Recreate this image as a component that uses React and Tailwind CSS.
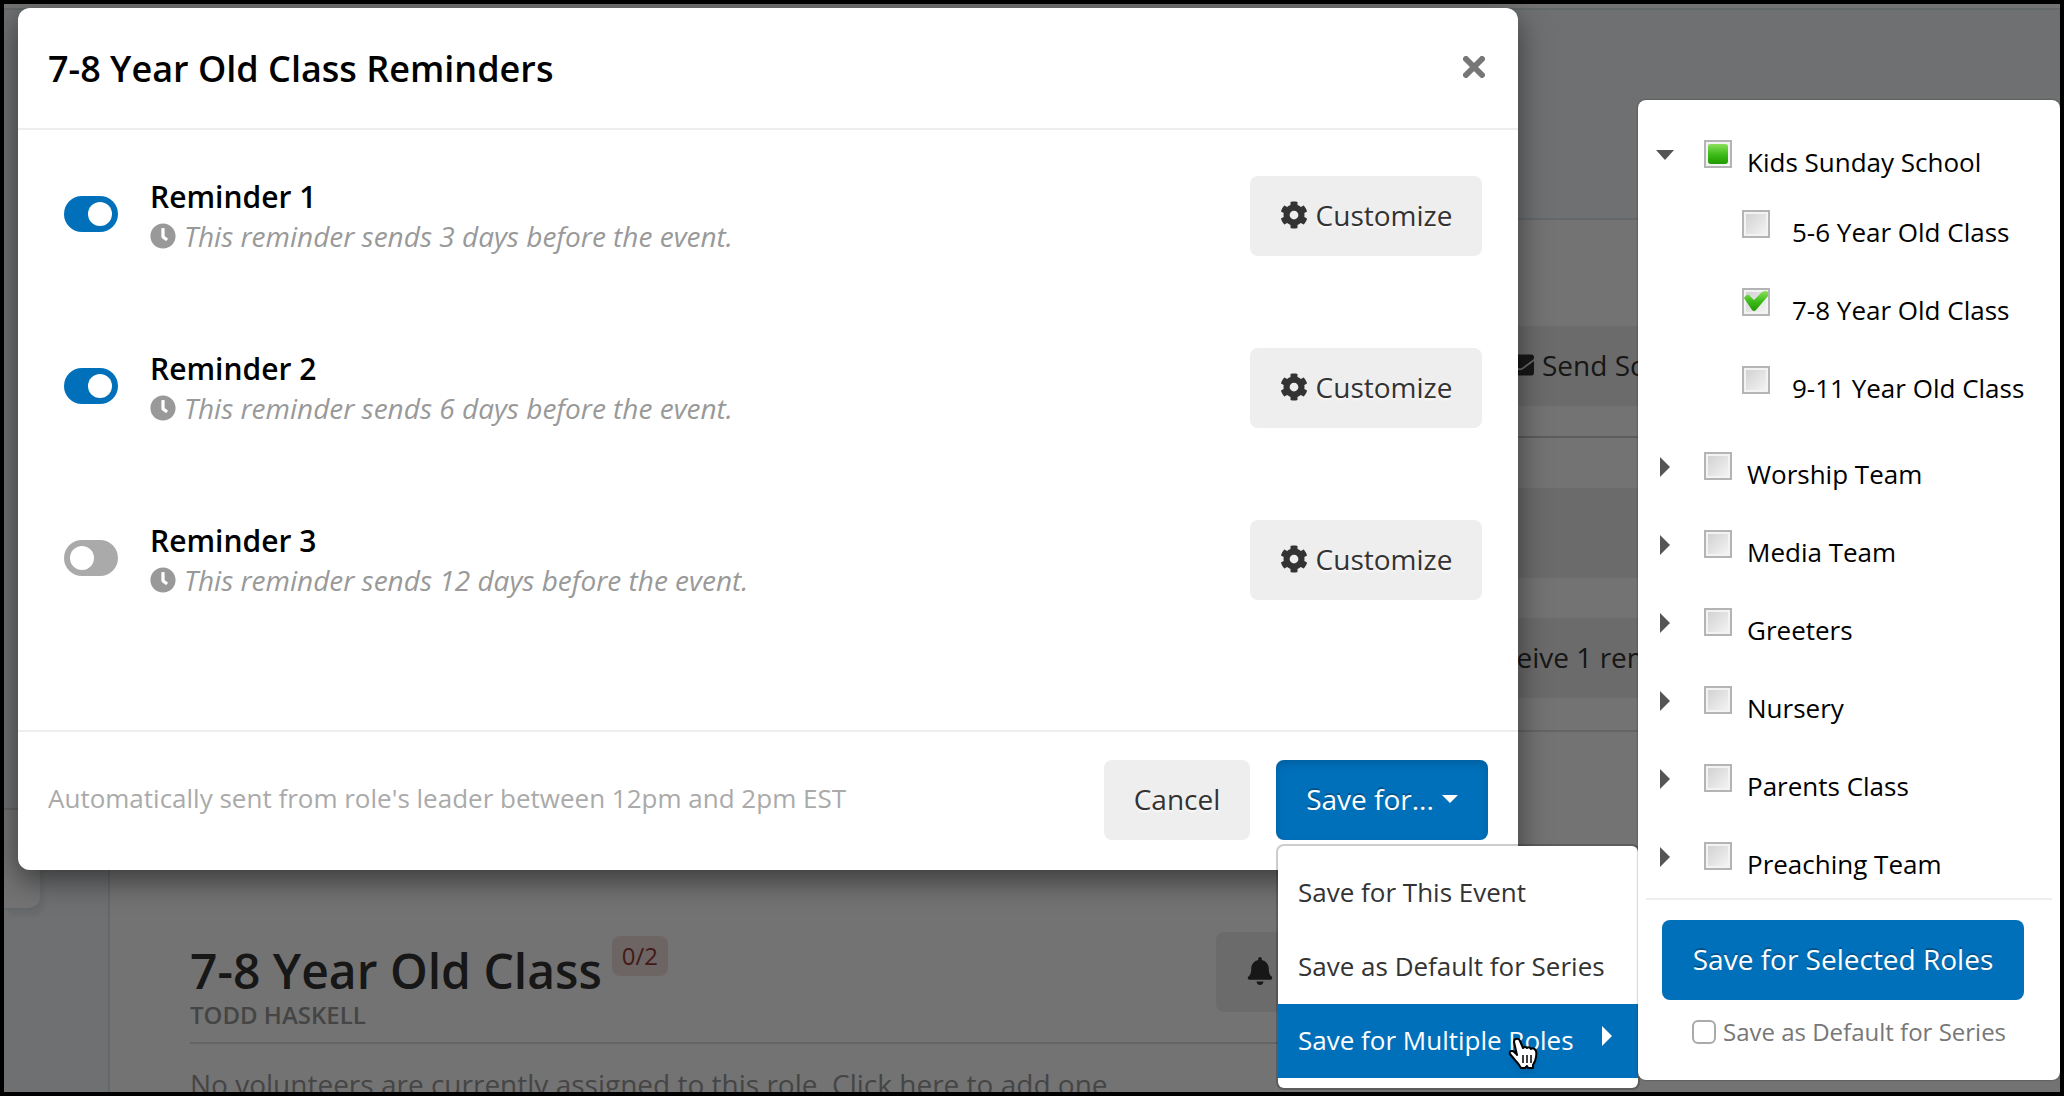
import React, { useState } from "react";
import { FaBell, FaClock, FaCog, FaEnvelope } from "react-icons/fa";

const REMINDERS = [
    { id: 1, name: "Reminder 1", days: 3, enabled: true },
    { id: 2, name: "Reminder 2", days: 6, enabled: true },
    { id: 3, name: "Reminder 3", days: 12, enabled: false },
];

const CHILD_ROLES = [
    { name: "5-6 Year Old Class", checked: false },
    { name: "7-8 Year Old Class", checked: true },
    { name: "9-11 Year Old Class", checked: false },
];

const TEAMS = ["Worship Team", "Media Team", "Greeters", "Nursery", "Parents Class", "Preaching Team"];

const grayButton =
    "flex h-20 items-center justify-center rounded-lg bg-[#eeeeee] pb-[2px] text-[28px] text-[#333333] [text-shadow:0_2px_2px_rgba(255,255,255,0.75)]";
const blueButton =
    "flex h-20 items-center justify-center rounded-lg bg-[#0070bb] pb-[2px] text-[28px] text-white [text-shadow:0_-2px_0_rgba(0,0,0,0.25)]";

const Toggle = ({ label, checked, onChange }) => (
    <label className="relative block h-9 w-[54px] shrink-0">
        <input
            type="checkbox"
            role="switch"
            aria-label={label}
            checked={checked}
            onChange={onChange}
            className="peer block h-9 w-[54px] appearance-none rounded-full bg-[#aaaaaa] checked:bg-[#0070bb]"
        />
        <span className="absolute left-[6px] top-[6px] h-6 w-6 rounded-full bg-white peer-checked:left-6" />
    </label>
);

const RoleCheckbox = ({ id, checked = false, partial = false }) => {
    const [on, setOn] = useState(checked);
    return (
        <span className="relative block h-7 w-7 shrink-0">
            <input
                id={id}
                type="checkbox"
                checked={on}
                onChange={() => setOn(!on)}
                className="block h-7 w-7 appearance-none border-2 border-[#b4b4b4] bg-linear-to-br from-[#cfcfcf] to-[#f6f6f6] shadow-[inset_0_0_0_2px_#f3f3f3]"
            />
            <svg viewBox="0 0 28 28" className="pointer-events-none absolute inset-0 h-7 w-7">
                <defs>
                    <linearGradient id="green" x1="0" y1="0" x2="0" y2="1">
                        <stop offset="0" stopColor="#8be05a" />
                        <stop offset="0.5" stopColor="#3fbd1c" />
                        <stop offset="1" stopColor="#1f9a00" />
                    </linearGradient>
                </defs>
                {partial && <rect x="4" y="4" width="20" height="20" rx="3" fill="url(#green)" />}
                {on && !partial && (
                    <path d="M2 10 Q4 6 7 7 L12 12 L20 4 Q24 2 26 4 L26 8 L14 22 Q12 24 10 22 Z" fill="url(#green)" />
                )}
            </svg>
        </span>
    );
};

const Background = () => (
    <div className="absolute inset-0 flex flex-col overflow-hidden bg-[#f4f8fb] text-[28px] text-[#333333]">
        <div className="h-[6px] shrink-0 border-b-2 border-[#dbe6ee] bg-white" />
        <div className="flex h-[208px] shrink-0 items-start justify-end">
            <p className="-mr-12 mt-[80px] flex gap-2 whitespace-nowrap text-[26px]">
                <a href="#previous" className="text-[#0070bb]">Previous Event</a>
                <span>|</span>
                <a href="#next" className="text-[#0070bb]">Next Event</a>
            </p>
        </div>
        <div className="flex min-h-0 flex-1">
            <aside className="w-[104px] shrink-0">
                <div className="mt-[590px] h-[102px] w-9 rounded-br-xl border-b-2 border-t-2 border-b-[#dbe6ee] border-t-[#dddddd] bg-white shadow-[4px_6px_4px_rgba(0,0,0,0.06)]" />
            </aside>
            <main className="flex min-w-0 flex-1 flex-col border-l-2 border-t-2 border-[#dbe6ee] bg-white">
                <div className="mt-[106px] flex h-20 shrink-0 items-center bg-[#eeeeee] pb-[2px] pl-[1396px]">
                    <FaEnvelope className="mr-2 h-7 w-7 shrink-0" />
                    <span className="whitespace-nowrap">Send Schedule</span>
                </div>
                <div className="mt-[30px] h-[2px] shrink-0 bg-[#cccccc]" />
                <div className="mt-[50px] h-[90px] shrink-0 bg-[#eeeeee]" />
                <div className="mt-10 flex h-20 shrink-0 items-center bg-[#eeeeee] pb-[2px] pl-[1366px]">
                    <span className="whitespace-nowrap">receive 1 reminder</span>
                </div>
                <div className="mt-8 h-[2px] shrink-0 bg-[#dddddd]" />
                <section className="px-20 pt-[200px]">
                    <div className="flex h-[112px] items-start border-b-2 border-[#dddddd]">
                        <div>
                            <div className="flex items-start gap-[10px]">
                                <h1 className="mt-[7px] text-[48px] font-semibold leading-[64px]">7-8 Year Old Class</h1>
                                <span className="mt-1 flex h-10 items-center rounded-lg bg-[#f2dede] px-[10px] text-[24px] text-[#953b39]">0/2</span>
                            </div>
                            <p className="text-[24px] font-semibold leading-6 text-[#999999]">TODD HASKELL</p>
                        </div>
                        <button type="button" aria-label="Role reminders" className="ml-[548px] flex h-20 w-[120px] items-center rounded-lg bg-[#eeeeee] pb-[2px] pl-[30px]">
                            <FaBell className="h-7 w-7" />
                        </button>
                    </div>
                    <p className="mt-5 whitespace-nowrap leading-10 text-[#999999]">
                        No volunteers are currently assigned to this role. Click here to add one.
                    </p>
                </section>
            </main>
        </div>
    </div>
);

const RolesPanel = () => (
    <div className="absolute -bottom-[2px] left-full w-[422px] rounded-lg bg-white pt-10 text-[26px] text-black shadow-[0_0_2px_rgba(0,0,0,0.5)]">
        <ul>
            <li>
                <div className="flex h-[70px] items-start pl-[18px]">
                    <svg viewBox="0 0 18 10" className="mr-[30px] mt-[10px] h-[10px] w-[18px]">
                        <path d="M0 0H18L9 10Z" fill="#555555" />
                    </svg>
                    <RoleCheckbox id="kids" partial />
                    <label htmlFor="kids" className="ml-[15px] mt-1 leading-9">Kids Sunday School</label>
                </div>
                <ul className="mb-2">
                    {CHILD_ROLES.map((role) => (
                        <li key={role.name} className="flex h-[78px] items-start pl-[104px]">
                            <RoleCheckbox id={role.name} checked={role.checked} />
                            <label htmlFor={role.name} className="ml-[22px] mt-1 whitespace-nowrap leading-9">{role.name}</label>
                        </li>
                    ))}
                </ul>
            </li>
            {TEAMS.map((team) => (
                <li key={team} className="flex h-[78px] items-start pl-[22px] last:h-14">
                    <svg viewBox="0 0 10 20" className="mr-[34px] mt-[5px] h-5 w-[10px]">
                        <path d="M0 0V20L10 10Z" fill="#555555" />
                    </svg>
                    <RoleCheckbox id={team} />
                    <label htmlFor={team} className="ml-[15px] mt-1 leading-9">{team}</label>
                </li>
            ))}
        </ul>
        <div className="mx-2 border-t-2 border-[#eeeeee] px-4 pb-8 pt-5">
            <button type="button" className={`${blueButton} w-[362px]`}>Save for Selected Roles</button>
            <label className="mt-4 flex h-8 items-center gap-[7px] pl-[30px] text-[24px] text-[#777777]">
                <input type="checkbox" className="h-6 w-6 appearance-none rounded-md border-2 border-[#aaaaaa] bg-white" />
                Save as Default for Series
            </label>
        </div>
    </div>
);

const HandCursor = () => (
    <svg viewBox="0 0 30 34" className="pointer-events-none absolute left-[230px] top-[33px] h-[34px] w-[30px] drop-shadow-md">
        <path
            d="M8 2Q11 1 12 4L15 11Q17 9 19 11Q21 9 23 12Q26 10 28 14Q29 18 27 24L25 28V31H20L19 29L17 31H13Q11 27 7 23L2 17Q1 14 4 14Q6 14 9 18L6 5Q6 2 8 2Z"
            fill="white"
            stroke="black"
            strokeWidth="2"
            strokeLinejoin="round"
        />
        <path d="M15 18V26M19 18V26M23 18V26" stroke="black" strokeWidth="1.5" />
    </svg>
);

const SaveMenu = () => (
    <ul className="absolute left-0 top-full mt-1 w-[364px] rounded-lg border-2 border-black/20 bg-white bg-clip-padding py-[10px] text-[26px] text-[#333333]">
        <li><button type="button" className="block h-[74px] w-full px-5 pb-[2px] text-left">Save for This Event</button></li>
        <li><button type="button" className="block h-[74px] w-full px-5 pb-[2px] text-left">Save as Default for Series</button></li>
        <li className="relative">
            <button type="button" className="flex h-[74px] w-full items-center justify-between bg-[#0070bb] px-5 pb-[2px] text-left text-white">
                Save for Multiple Roles
                <svg viewBox="0 0 10 20" className="mb-2 mr-[6px] h-5 w-[10px]">
                    <path d="M0 0V20L10 10Z" fill="white" />
                </svg>
            </button>
            <HandCursor />
            <RolesPanel />
        </li>
    </ul>
);

const App = () => {
    const [reminders, setReminders] = useState(REMINDERS);

    const toggleReminder = (id) => {
        setReminders(reminders.map((r) => (r.id === id ? { ...r, enabled: !r.enabled } : r)));
    };

    return (
        <div className="relative h-screen overflow-hidden border-4 border-black font-['Open_Sans','Noto_Sans',sans-serif]">
            <Background />
            <div className="absolute inset-0 bg-black/55" />

            {/* Reminders dialog */}
            <div className="absolute inset-0 pl-[14px] pt-1">
                <div role="dialog" aria-labelledby="dialog-title" className="w-full max-w-[1500px] rounded-xl bg-white shadow-[0_10px_30px_rgba(0,0,0,0.5)]">
                    <header className="flex h-[122px] items-center justify-between border-b-2 border-[#eeeeee] px-[30px]">
                        <h2 id="dialog-title" className="pt-[2px] text-[36px] font-semibold text-black">7-8 Year Old Class Reminders</h2>
                        <button type="button" aria-label="Close" className="flex h-8 w-7 items-center justify-center pb-[2px]">
                            <svg viewBox="0 0 22 22" className="h-[22px] w-[22px]">
                                <path d="M3 3L19 19M19 3L3 19" stroke="#777777" strokeWidth="6" strokeLinecap="round" />
                            </svg>
                        </button>
                    </header>

                    <div className="pb-[38px] pt-[46px]">
                        {reminders.map((reminder) => (
                            <div key={reminder.id} className="flex h-[172px] items-start pl-[46px] pr-9">
                                <div className="mt-5">
                                    <Toggle label={reminder.name} checked={reminder.enabled} onChange={() => toggleReminder(reminder.id)} />
                                </div>
                                <div className="ml-8 flex-1">
                                    <h3 className="text-[30px] font-semibold leading-[42px] text-black">{reminder.name}</h3>
                                    <p className="flex items-center gap-2 text-[28px] italic leading-9 text-[#999999]">
                                        <FaClock className="h-[26px] w-[26px]" />
                                        This reminder sends {reminder.days} days before the event.
                                    </p>
                                </div>
                                <button type="button" className={`${grayButton} w-[232px] gap-2`}>
                                    <FaCog className="h-7 w-7" />
                                    Customize
                                </button>
                            </div>
                        ))}
                    </div>

                    <footer className="flex h-[140px] items-start justify-between border-t-2 border-[#eeeeee] pl-[30px] pr-[30px] pt-7">
                        <p className="mt-5 text-[26px] leading-9 text-[#aaaaaa]">Automatically sent from role's leader between 12pm and 2pm EST</p>
                        <div className="flex gap-[26px]">
                            <button type="button" className={`${grayButton} w-[146px]`}>Cancel</button>
                            <div className="relative">
                                <button type="button" className={`${blueButton} w-[212px] gap-2 shadow-[inset_0_4px_8px_rgba(0,0,0,0.15)]`}>
                                    Save for...
                                    <svg viewBox="0 0 16 8" className="h-2 w-4">
                                        <path d="M0 0H16L8 8Z" fill="white" />
                                    </svg>
                                </button>
                                <SaveMenu />
                            </div>
                        </div>
                    </footer>
                </div>
            </div>
        </div>
    );
};

export default App;
